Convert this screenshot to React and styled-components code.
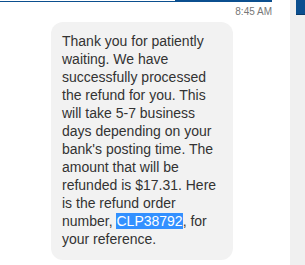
import styled, { createGlobalStyle } from "styled-components";

const GlobalStyle = createGlobalStyle`
  html, body {
    margin: 0;
    padding: 0;
    background: #fff;
  }
`;

const Page = styled.div`
  display: flex;
  height: 100vh;
  overflow: hidden;
  font-family: "Liberation Sans", Arial, sans-serif;
`;

const Thread = styled.div`
  width: 290px;
  flex-shrink: 0;
  display: flex;
  flex-direction: column;
`;

const TopEdge = styled.div`
  display: flex;
  height: 2px;
`;

const EdgeLine = styled.div`
  width: ${(p) => p.$width}px;
  height: ${(p) => p.$thick}px;
  margin-top: ${(p) => 2 - p.$thick}px;
  background: #0b4f8f;
`;

const Timestamp = styled.div`
  margin-top: 4px;
  padding-right: 18px;
  text-align: right;
  font-size: 10px;
  line-height: 12px;
  color: #777;
`;

const Bubble = styled.div`
  margin: 4px 0 0 51px;
  width: 160px;
  padding: 10px 11px 12px;
  border-radius: 12px;
  background: #f2f2f2;
  color: #333;
  font-size: 14px;
  line-height: 18px;
`;

const Selected = styled.span`
  background: #3390ff;
  color: #fff;
`;

const SidePanel = styled.div`
  flex: 1;
  background: #f0f0f0;
  display: flex;
  justify-content: flex-end;
  align-items: flex-start;
`;

const PanelTab = styled.div`
  width: 9px;
  height: 14px;
  background: #0b4f8f;
  border-bottom: 1px solid #083a6a;
`;

export default function App() {
  return (
    <>
      <GlobalStyle />
      <Page>
        <Thread>
          <TopEdge>
            <EdgeLine $width={175} $thick={1} />
            <EdgeLine $width={97} $thick={2} />
          </TopEdge>
          <Timestamp>8:45 AM</Timestamp>
          <Bubble>
            Thank you for patiently waiting. We have successfully processed the
            refund for you. This will take 5-7 business days depending on your
            bank's posting time. The amount that will be refunded is $17.31.
            Here is the refund order number, <Selected>CLP38792</Selected>, for
            your reference.
          </Bubble>
        </Thread>
        <SidePanel>
          <PanelTab />
        </SidePanel>
      </Page>
    </>
  );
}
